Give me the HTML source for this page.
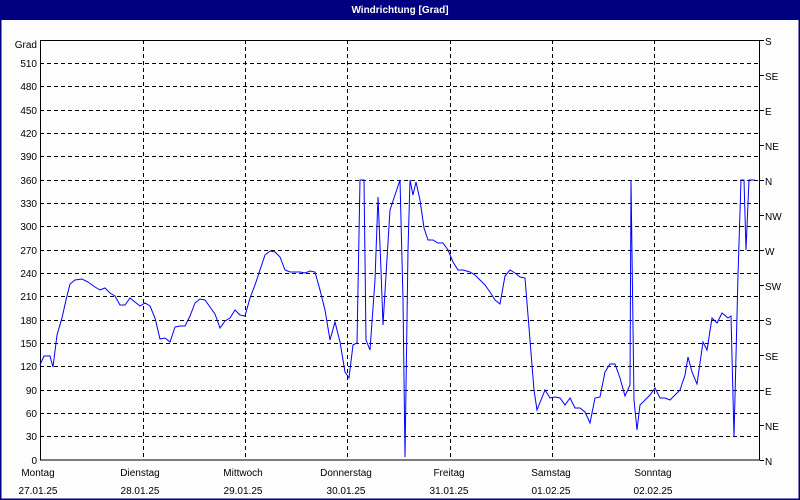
<!DOCTYPE html>
<html><head><meta charset="utf-8"><style>
html,body{margin:0;padding:0;background:#fff;}
body{width:800px;height:500px;overflow:hidden;position:relative;font-family:"Liberation Sans",sans-serif;}
</style></head><body>
<svg width="800" height="500" xmlns="http://www.w3.org/2000/svg" style="position:absolute;left:0;top:0" font-family="Liberation Sans, sans-serif" font-size="10">
<rect x="0" y="0" width="800" height="500" fill="#fdfdfd"/>
<rect x="0.5" y="0.5" width="799" height="499" fill="none" stroke="#000080" stroke-width="2"/>
<rect x="0" y="0" width="800" height="20" fill="#000080"/>
<text x="400" y="13" fill="#fff" font-weight="bold" text-anchor="middle">Windrichtung [Grad]</text>
<g stroke="#000" stroke-width="1" stroke-dasharray="4,3" fill="none">
<path d="M143.5 40V460M245.5 40V460M347.5 40V460M450.5 40V460M552.5 40V460M654.5 40V460"/>
<path d="M40 63.5H760M40 86.5H760M40 110.5H760M40 133.5H760M40 156.5H760M40 180.5H760M40 203.5H760M40 226.5H760M40 250.5H760M40 273.5H760M40 296.5H760M40 320.5H760M40 343.5H760M40 366.5H760M40 390.5H760M40 413.5H760M40 436.5H760"/>
</g>
<rect x="40.5" y="40.5" width="719" height="419.5" fill="none" stroke="#000" stroke-width="1"/>
<g fill="#000" text-anchor="end">
<text x="37" y="48">Grad</text>
<text x="37" y="67">510</text><text x="37" y="90">480</text><text x="37" y="114">450</text><text x="37" y="137">420</text><text x="37" y="160">390</text><text x="37" y="184">360</text><text x="37" y="207">330</text><text x="37" y="230">300</text><text x="37" y="254">270</text><text x="37" y="277">240</text><text x="37" y="300">210</text><text x="37" y="324">180</text><text x="37" y="347">150</text><text x="37" y="370">120</text><text x="37" y="394">90</text><text x="37" y="417">60</text><text x="37" y="440">30</text><text x="37" y="464">0</text>
</g>
<g stroke="#000"><path d="M760 40.5h4M760 75.5h4M760 110.5h4M760 145.5h4M760 180.5h4M760 215.5h4M760 250.5h4M760 285.5h4M760 320.5h4M760 355.5h4M760 390.5h4M760 425.5h4M760 460.5h4"/></g>
<g fill="#000">
<text x="765" y="45">S</text><text x="765" y="80">SE</text><text x="765" y="115">E</text><text x="765" y="150">NE</text><text x="765" y="185">N</text><text x="765" y="220">NW</text><text x="765" y="255">W</text><text x="765" y="290">SW</text><text x="765" y="325">S</text><text x="765" y="360">SE</text><text x="765" y="395">E</text><text x="765" y="430">NE</text><text x="765" y="465">N</text>
</g>
<g fill="#000" text-anchor="middle">
<text x="38" y="476">Montag</text><text x="38" y="494">27.01.25</text>
<text x="140" y="476">Dienstag</text><text x="140" y="494">28.01.25</text>
<text x="243" y="476">Mittwoch</text><text x="243" y="494">29.01.25</text>
<text x="346" y="476">Donnerstag</text><text x="346" y="494">30.01.25</text>
<text x="449" y="476">Freitag</text><text x="449" y="494">31.01.25</text>
<text x="551" y="476">Samstag</text><text x="551" y="494">01.02.25</text>
<text x="653" y="476">Sonntag</text><text x="653" y="494">02.02.25</text>
</g>
<polyline fill="none" stroke="#0000ff" stroke-width="1" points="40,365 44,356 50,356 53,367 57,335 62,318 66,300 70,284 75,280 82,279 88,282 95,287 100,290 105,288 110,293 115,296 120,305 125,305 130,298 135,302 140,306 145,303 150,306 155,318 160,339 165,338 170,342 175,327 180,326 185,326 190,316 195,303 200,299 205,300 210,307 215,314 220,328 225,321 230,318 235,310 240,315 245,316 250,298 255,285 260,270 265,255 270,251 275,252 280,257 285,270 290,272 295,272 300,272 305,273 310,271 315,272 320,290 325,310 330,340 335,322 340,342 345,372 349,378 353,345 357,343 360,180 364,180 366,340 370,350 375,280 378,197 381,270 383,325 386,275 390,210 395,195 400,180 403,300 405,457 408,250 410,180 413,195 416,182 420,200 424,228 428,240 433,240 438,243 443,243 448,250 453,262 458,270 463,270 470,272 475,275 480,280 485,285 490,292 495,300 500,304 505,276 510,270 515,273 520,277 525,278 530,340 534,390 537,410 541,400 545,390 550,398 555,397 560,398 565,405 570,398 575,408 580,408 585,412 590,423 595,398 600,397 605,372 610,364 615,364 620,378 625,396 630,385 631,180 634,400 637,430 640,405 645,400 650,395 655,388 660,398 665,398 670,400 675,395 680,390 685,375 688,357 692,372 697,384 703,342 707,350 712,318 717,323 722,313 728,318 731,316 734,437 738,275 741,180 744,180 746,250 749,180 752,180 755,180"/>
</svg>
</body></html>
